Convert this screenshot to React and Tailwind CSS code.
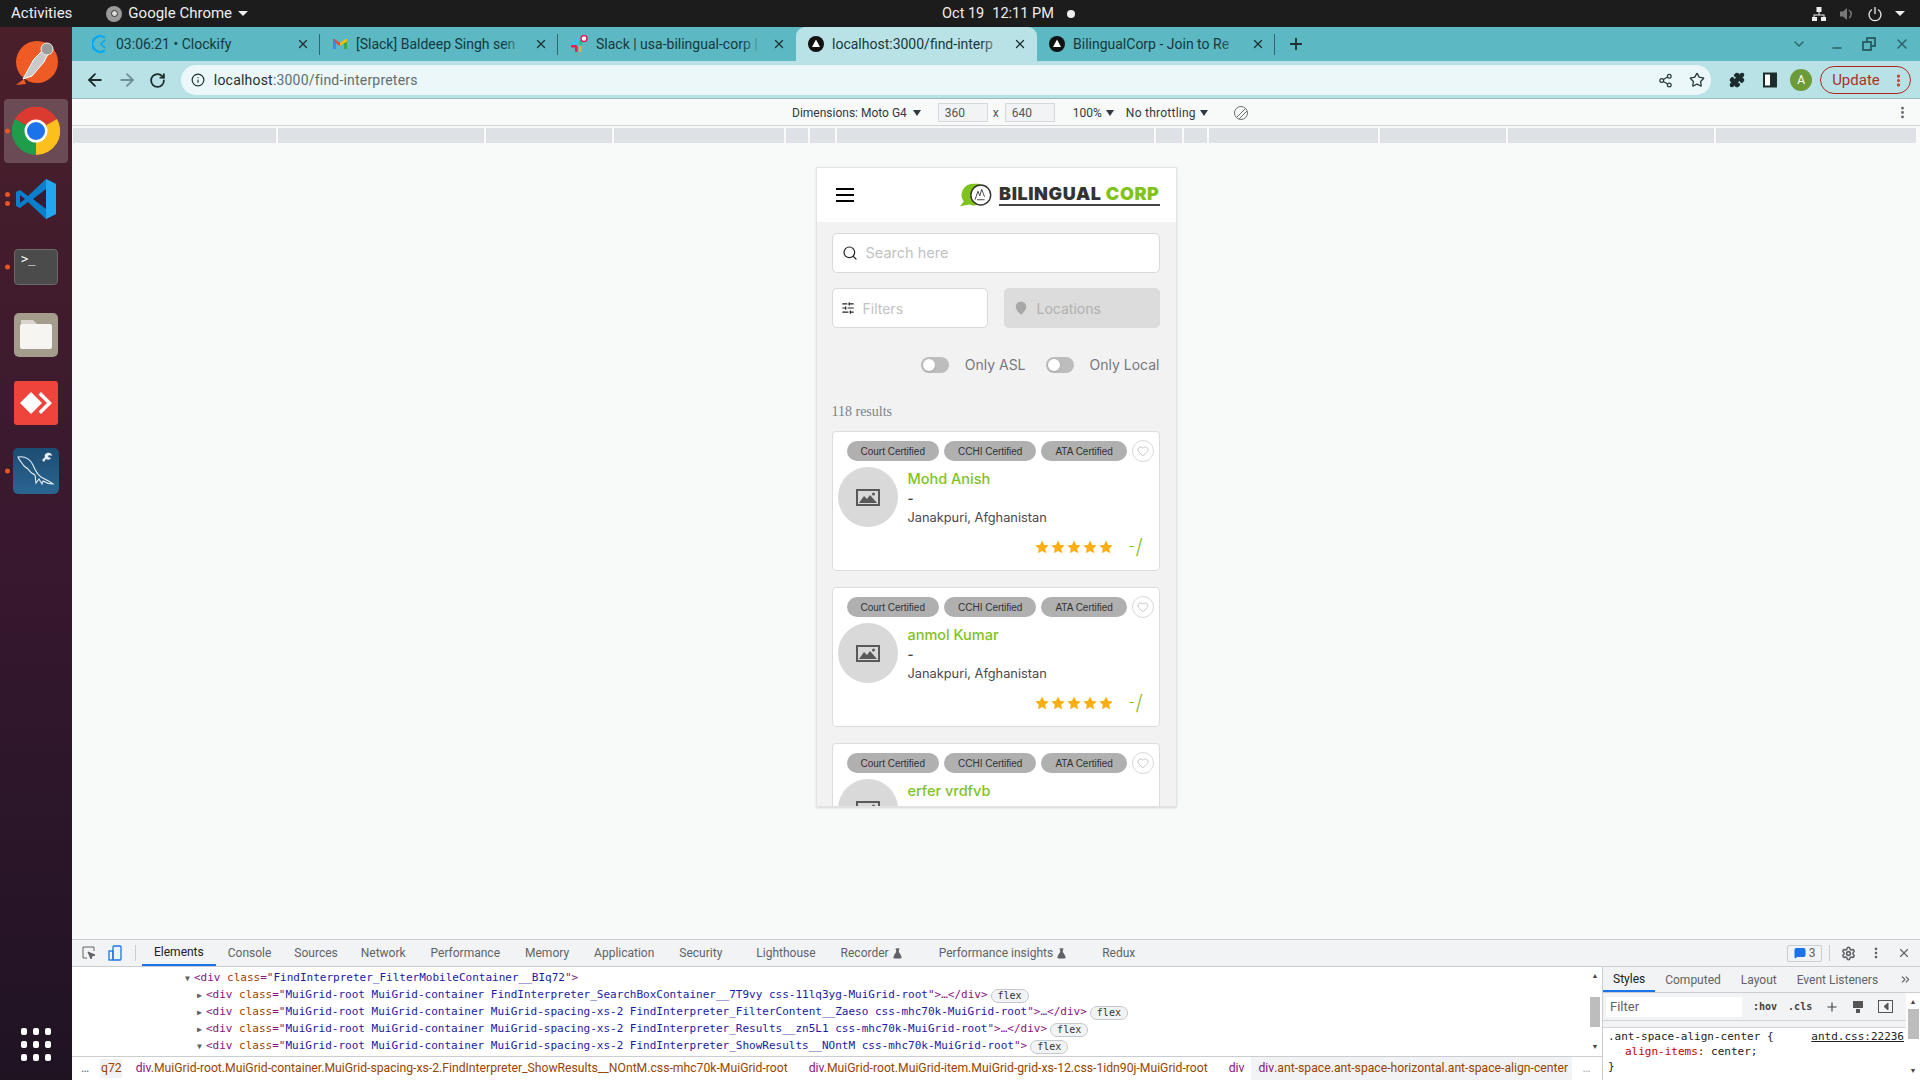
import React from 'react';
import { ArrowLeft, ArrowRight, RotateCw, Info, Share2, Star, Puzzle, Search, SlidersHorizontal, MapPin, Heart, X, Plus, ChevronDown, Minus, MoreVertical, Settings, MessageSquare, ChevronsRight, FlaskConical } from 'lucide-react';

const mediaStops = [203, 206, 126, 170, 22, 25, 317, 26, 23, 169, 126, 206, 200];

function BlackTriangleIcon() {
  return (
    <svg width="16" height="16" viewBox="0 0 16 16" className="shrink-0">
      <circle cx="8" cy="8" r="8" fill="#111" />
      <path d="M8 3.500 L12 11 H4 Z" fill="#fff" />
    </svg>
  );
}

function GmailIcon() {
  return (
    <svg width="16" height="16" viewBox="0 0 16 16" className="shrink-0">
      <path d="M1 3v10h3V7l4 3V7L2.500 3z" fill="#ea4335" />
      <path d="M1 3v10h3V6z" fill="#4285f4" />
      <path d="M15 3v10h-3V7L8 10V7l5.500-4z" fill="#fbbc04" />
      <path d="M15 6v7h-3V7z" fill="#34a853" />
    </svg>
  );
}

function SlackIcon() {
  return (
    <svg width="18" height="18" viewBox="0 0 18 18" className="shrink-0">
      <rect x="1" y="7" width="6" height="2.500" rx="1.200" fill="#36c5f0" />
      <rect x="6" y="3" width="2.500" height="6" rx="1.200" fill="#36c5f0" />
      <rect x="9.500" y="5" width="2.500" height="5" rx="1.200" fill="#2eb67d" />
      <rect x="1" y="10" width="6" height="2.500" rx="1.200" fill="#e01e5a" />
      <rect x="5" y="11" width="2.500" height="6" rx="1.200" fill="#e01e5a" />
      <rect x="9" y="11" width="2.500" height="6" rx="1.200" fill="#ecb22e" />
      <circle cx="14" cy="3.500" r="3" fill="#fff" stroke="#e01e5a" strokeWidth="1.500" />
    </svg>
  );
}

function ClockifyIcon() {
  return (
    <svg width="16" height="20" viewBox="0 0 16 20" fill="none" className="shrink-0">
      <path d="M13 3.500 A8 8 0 1 0 13 16.500" stroke="#03a9f4" strokeWidth="2.200" />
      <path d="M13 6 L9 10 L13 14" stroke="#03a9f4" strokeWidth="1.500" />
    </svg>
  );
}

function BrowserTab({ icon, title, width, active, separator, first }) {
  return (
    <div
      style={{ width }}
      className={`relative flex h-full shrink-0 items-center gap-2 pr-[10px] ${first ? 'pl-[20px]' : 'pl-[12px]'} ${active ? 'rounded-t-[9px] bg-[#b9e2e6]' : ''}`}
    >
      {icon}
      <div className="relative min-w-0 flex-1 whitespace-nowrap text-[14px] text-[#15393d]">
        {title}
        <div className={`absolute inset-y-0 right-0 w-6 bg-gradient-to-r from-transparent ${active ? 'to-[#b9e2e6]' : 'to-[#5cb8c2]'}`} />
      </div>
      <X size={14} strokeWidth={2.2} className="shrink-0 text-[#1d2f31]" />
      {separator && <div className="absolute right-0 top-[7px] h-[21px] w-px bg-[#33666c]" />}
    </div>
  );
}

function GnomeTopBar() {
  return (
    <div className="flex h-[27px] shrink-0 items-center bg-[#1c1c1c] text-[15px] text-[#eeeeee]">
      <span className="ml-[11px]">Activities</span>
      <div className="ml-[34px] flex items-center gap-[6px]">
        <div className="flex h-[16px] w-[16px] items-center justify-center rounded-full bg-[#9a9a9a]">
          <div className="h-[7px] w-[7px] rounded-full border border-[#333] bg-[#ddd]" />
        </div>
        <span>Google Chrome</span>
        <span className="h-0 w-0 border-x-[5px] border-t-[5px] border-x-transparent border-t-[#eee]" />
      </div>
      <div className="ml-[694px] flex items-center text-[14.500px]">
        <span>Oct 19</span>
        <span className="ml-[8px]">12:11 PM</span>
        <span className="ml-[13px] h-[8px] w-[8px] rounded-full bg-[#eee]" />
      </div>
      <div className="ml-auto mr-[15px] flex items-center gap-[12px]">
        <svg width="16" height="16" viewBox="0 0 16 16" fill="#eee">
          <rect x="5.500" y="1" width="5" height="5" />
          <rect x="1" y="11" width="5" height="4" />
          <rect x="10" y="11" width="5" height="4" />
          <path d="M7.500 6h1v2.500h5V11h-1V9.500h-9V11h-1V8.500h5z" />
        </svg>
        <svg width="16" height="16" viewBox="0 0 16 16" fill="#777">
          <path d="M1 5.500h3L8 2v12l-4-3.500H1z" />
          <path d="M10 4c3 2 3 6 0 8" fill="none" stroke="#777" strokeWidth="1.500" />
        </svg>
        <svg width="16" height="16" viewBox="0 0 16 16" fill="none" stroke="#eee" strokeWidth="1.300">
          <path d="M5 3.500a6 6 0 1 0 6 0M8 1v7" />
        </svg>
        <span className="h-0 w-0 border-x-[5px] border-t-[5px] border-x-transparent border-t-[#eee]" />
      </div>
    </div>
  );
}

function DockSlot({ children, dots = 0, active }) {
  return (
    <div className="relative flex h-[68px] w-full items-center justify-center">
      {active && <div className="absolute inset-x-[4px] inset-y-[2px] rounded-[4px] bg-white/20" />}
      <div className="relative">{children}</div>
      {dots > 0 && (
        <div className="absolute left-[5px] top-1/2 flex -translate-y-1/2 flex-col gap-[4px]">
          {Array.from({ length: dots }).map((_, i) => (
            <span key={i} className="block h-[5px] w-[5px] rounded-full bg-[#e95420]" />
          ))}
        </div>
      )}
    </div>
  );
}

function Dock() {
  return (
    <div className="flex w-[72px] shrink-0 flex-col items-center bg-gradient-to-b from-[#4a1f2a] via-[#38182f] to-[#1f1322] pt-[2px]">
      <DockSlot>
        <svg width="44" height="46" viewBox="0 0 44 46">
          <circle cx="23" cy="22" r="21" fill="#ef5b25" />
          <path d="M2 45 L10 39 L12 44 Z" fill="#ef5b25" />
          <path d="M9 39 L20 19 L30 9 L35 12 L30 22 L18 36 Z" fill="#c9c9c9" stroke="#fff" strokeWidth="1" />
          <circle cx="33" cy="9" r="6" fill="#9b9b9b" stroke="#eee" strokeWidth="1" />
        </svg>
      </DockSlot>
      <DockSlot active dots={1}>
        <svg width="48" height="48" viewBox="0 0 48 48">
          <path d="M24 24 L3 12 A24 24 0 0 1 45 12 Z" fill="#db3a2f" />
          <path d="M24 24 L45 12 A24 24 0 0 1 24 48 Z" fill="#fcc01c" />
          <path d="M24 24 L24 48 A24 24 0 0 1 3 12 Z" fill="#1f9d4b" />
          <circle cx="24" cy="24" r="11.500" fill="#fff" />
          <circle cx="24" cy="24" r="9" fill="#1a73e8" />
        </svg>
      </DockSlot>
      <DockSlot dots={2}>
        <svg width="42" height="42" viewBox="0 0 42 42">
          <path d="M31 1 L41 6 V36 L31 41 L13 24 L5 30 L1 28 V14 L5 12 L13 18 Z" fill="#0a7fcb" />
          <path d="M31 1 L41 6 V36 L31 41 Z" fill="#23a6f0" />
          <path d="M31 11 V31 L18 21 Z" fill="#3a1a2e" />
          <path d="M5 17 L10 21 L5 25 Z" fill="#3a1a2e" />
        </svg>
      </DockSlot>
      <DockSlot dots={1}>
        <div className="h-[36px] w-[44px] rounded-[4px] border border-[#6b6b6b] bg-[#4b4b4b] pl-[6px] font-['DejaVu_Sans_Mono',monospace] text-[12px] leading-[18px] text-white">
          &gt;_
        </div>
      </DockSlot>
      <DockSlot>
        <div className="flex h-[44px] w-[44px] items-center justify-center rounded-[5px] bg-[#a59d8b]">
          <svg width="34" height="30" viewBox="0 0 34 30">
            <path d="M2 0h12l4 4H2z" fill="#d9d5cc" />
            <rect x="1" y="4" width="32" height="25" rx="2" fill="#f7f5f2" />
          </svg>
        </div>
      </DockSlot>
      <DockSlot>
        <div className="flex h-[44px] w-[44px] items-center justify-center rounded-[3px] bg-[#ef443b]">
          <svg width="32" height="22" viewBox="0 0 32 22" fill="#fff">
            <path d="M11 0 L22 11 L11 22 L0 11 Z" />
            <path d="M21 0 L32 11 L21 22 L18.500 19.500 L27 11 L18.500 2.500 Z" />
          </svg>
        </div>
      </DockSlot>
      <DockSlot dots={1}>
        <div className="flex h-[46px] w-[46px] items-center justify-center rounded-[5px] bg-gradient-to-b from-[#1d4d73] to-[#2a6592]">
          <svg width="42" height="42" viewBox="0 0 42 42" fill="none" stroke="#e6eef3" strokeWidth="1.100">
            <path d="M3 7c7-1 12 2 15 8 2 5 4 9 8 12 4 2 8 4 12 7-4 0-7-1-10-3l-1 3-3-5-3 4-1-8c-3-1-5-3-7-6L9 16C7 13 4 10 3 7z" />
            <path d="M32 3c3-1 5 1 5 3l-3-1-1 2 3 1c-1 2-3 2-5 1l-2 3-2-2 3-3c-1-2 0-3 2-4z" fill="#e6eef3" stroke="none" />
          </svg>
        </div>
      </DockSlot>
      <div className="mb-[19px] mt-auto grid grid-cols-3 gap-x-[6px] gap-y-[6px]">
        {Array.from({ length: 9 }).map((_, i) => (
          <span key={i} className="block h-[7px] w-[6px] rounded-[2px] bg-white" />
        ))}
      </div>
    </div>
  );
}

function BrowserChrome() {
  return (
    <>
      <div className="flex h-[34px] shrink-0 items-end bg-[#5cb8c2]">
        <BrowserTab first width={248} title="03:06:21 • Clockify" icon={<ClockifyIcon />} separator />
        <BrowserTab width={238} title="[Slack] Baldeep Singh sen" icon={<GmailIcon />} separator />
        <BrowserTab width={238} title="Slack | usa-bilingual-corp |" icon={<SlackIcon />} />
        <BrowserTab width={241} title="localhost:3000/find-interp" icon={<BlackTriangleIcon />} active />
        <BrowserTab width={238} title="BilingualCorp - Join to Re" icon={<BlackTriangleIcon />} separator />
        <div className="ml-[12px] flex items-center self-center text-[#1d2f31]">
          <Plus size={18} strokeWidth={2.4} />
        </div>
        <div className="ml-auto mr-[10px] flex items-center self-center text-[#2d6269]">
          <ChevronDown size={16} />
          <Minus size={14} strokeWidth={2.5} className="ml-[23px] translate-y-[4px]" />
          <svg width="14" height="14" viewBox="0 0 14 14" fill="none" stroke="currentColor" strokeWidth="2" className="ml-[18px]">
            <rect x="5" y="1" width="8" height="8" />
            <rect x="1" y="5" width="8" height="8" fill="#5cb8c2" />
          </svg>
          <X size={16} strokeWidth={2.2} className="ml-[18px]" />
        </div>
      </div>
      <div className="flex h-[38px] shrink-0 items-center border-b border-[#9fb8bb] bg-[#b9e2e6] pr-[9px] pt-[1px]">
        <div className="flex w-[109px] items-center gap-[12px] pl-[13px] text-[#1c2b2d]">
          <ArrowLeft size={20} strokeWidth={2.2} />
          <ArrowRight size={20} strokeWidth={2.2} className="text-[#6c9196]" />
          <RotateCw size={17} strokeWidth={2.5} />
        </div>
        <div className="flex h-[30px] w-[1533px] items-center rounded-full bg-[#ebf7f8] pl-[10px] pr-[6px]">
          <Info size={14} className="text-[#1d2f31]" />
          <span className="ml-[9px] text-[14px] tracking-[0.2px] text-[#1f2f31]">
            localhost<span className="text-[#5f6f71]">:3000/find-interpreters</span>
          </span>
          <Share2 size={15} className="ml-auto text-[#2a3c3e]" />
          <Star size={16} className="ml-[16px] text-[#2a3c3e]" />
        </div>
        <Puzzle size={16} fill="#1c2b2d" className="ml-[18px] text-[#1c2b2d]" />
        <svg width="16" height="16" viewBox="0 0 16 16" className="ml-[17px]">
          <rect x="2" y="1.500" width="12" height="13" fill="#fff" stroke="#1c2b2d" strokeWidth="2" />
          <rect x="8" y="1" width="6" height="14" fill="#1c2b2d" />
        </svg>
        <div className="ml-[12px] flex h-[22px] w-[22px] items-center justify-center rounded-full bg-[#6d9b3a] text-[12px] text-white">A</div>
        <div className="ml-[8px] flex h-[28px] w-[91px] items-center rounded-full border border-[#b3261e] pl-[11px] text-[15px] text-[#a8322a]">
          Update
          <MoreVertical size={15} strokeWidth={3} className="ml-auto mr-[4px] text-[#d93025]" />
        </div>
      </div>
    </>
  );
}

function DeviceToolbar() {
  return (
    <div className="flex h-[27px] shrink-0 items-center border-b border-[#cfd2d4] bg-[#f8f9f9] pt-[1px] text-[12px] text-[#303942]">
      <span className="ml-[720px]">Dimensions: Moto G4</span>
      <span className="ml-[6px] h-0 w-0 border-x-[4px] border-t-[6px] border-x-transparent border-t-[#303942]" />
      <div className="ml-[17px] flex h-[19px] w-[50px] items-center border border-[#d6d9dc] bg-[#f1f3f4] pl-[6px] text-[#555]">360</div>
      <span className="ml-[5px] text-[#555]">x</span>
      <div className="ml-[6px] flex h-[19px] w-[50px] items-center border border-[#d6d9dc] bg-[#f1f3f4] pl-[6px] text-[#555]">640</div>
      <span className="ml-[18px]">100%</span>
      <span className="ml-[4px] h-0 w-0 border-x-[4px] border-t-[6px] border-x-transparent border-t-[#303942]" />
      <span className="ml-[12px] tracking-[0.25px]">No throttling</span>
      <span className="ml-[4px] h-0 w-0 border-x-[4px] border-t-[6px] border-x-transparent border-t-[#303942]" />
      <svg width="16" height="16" viewBox="0 0 16 16" fill="none" stroke="#6e6e6e" className="ml-[25px]">
        <circle cx="8" cy="8" r="6.500" />
        <path d="M3.500 12.500 L12.500 3.500 M6 14 L14 6" />
      </svg>
      <MoreVertical size={15} strokeWidth={2.5} className="ml-auto mr-[10px] text-[#5f6368]" />
    </div>
  );
}

function MediaBar() {
  return (
    <div className="flex h-[19px] shrink-0 gap-[2px] bg-[#f8f9f9] pl-[1px] pt-[2px]">
      {mediaStops.map((w, i) => (
        <div key={i} style={{ width: w }} className="h-[15px] bg-[#dee1e6]" />
      ))}
    </div>
  );
}

function FieldBox({ children, className }) {
  return <div className={`flex items-center rounded-[5px] border ${className}`}>{children}</div>;
}

function Toggle({ label }) {
  return (
    <div className="flex items-center gap-[16px]">
      <div className="flex h-[16px] w-[28px] items-center rounded-full bg-[#bdbdbd] pl-[2px]">
        <span className="h-[12px] w-[12px] rounded-full bg-white shadow" />
      </div>
      <span className="text-[14px] text-[#77777f]">{label}</span>
    </div>
  );
}

function InterpreterCard({ name }) {
  return (
    <div className="mb-[16px] h-[140px] shrink-0 rounded-[4px] border border-[#dcdcdc] bg-white">
      <div className="flex items-center pl-[14px] pt-[8px]">
        {['Court Certified', 'CCHI Certified', 'ATA Certified'].map((label) => (
          <span
            key={label}
            className="mr-[5px] flex h-[20px] shrink-0 items-center whitespace-nowrap rounded-full bg-[#b0b0b0] px-[14px] font-['Liberation_Sans',sans-serif] text-[10px] text-[#333]"
          >
            {label}
          </span>
        ))}
        <div className="flex h-[22px] w-[22px] shrink-0 items-center justify-center rounded-full border border-[#d9d9d9]">
          <Heart size={12} className="text-[#c8c8c8]" />
        </div>
      </div>
      <div className="flex pl-[5px] pt-[5px]">
        <div className="flex h-[60px] w-[60px] shrink-0 items-center justify-center rounded-full bg-[#d9d9d9]">
          <svg width="24" height="17" viewBox="0 0 24 17">
            <rect x="1" y="1" width="22" height="15" fill="none" stroke="#595959" strokeWidth="2" />
            <path d="M3 14 L8 7 L11 10 L14 6 L21 14 Z" fill="#595959" />
            <circle cx="17.500" cy="5" r="1.500" fill="#595959" />
          </svg>
        </div>
        <div className="ml-[10px] flex-1">
          <div className="text-[14.500px] font-medium leading-[24px] text-[#7fc31c]">{name}</div>
          <div className="text-[13px] font-semibold leading-[14px] text-[#444]">-</div>
          <div className="mt-[3px] text-[12.800px] leading-[20px] text-[#48484f]">Janakpuri, Afghanistan</div>
          <div className="mt-[9px] flex items-center pl-[127px]">
            {[0, 1, 2, 3, 4].map((i) => (
              <svg key={i} width="14" height="14" viewBox="0 0 24 24" fill="#faad14" className="mr-[2px]">
                <path d="M12 1 L15.400 8.300 L23.300 9.300 L17.500 14.800 L19 22.700 L12 18.800 L5 22.700 L6.500 14.800 L0.700 9.300 L8.600 8.300 Z" />
              </svg>
            ))}
            <span className="ml-[14px] text-[13px] text-[#7fc31c]">-</span>
            <span className="ml-[1px] text-[21px] font-light leading-[18px] text-[#8fbf1e]">/</span>
          </div>
        </div>
      </div>
    </div>
  );
}

function PhoneView() {
  return (
    <div className="flex h-[640px] w-[361px] flex-col overflow-hidden border-x border-b border-t border-[#e3e3e3] bg-[#f2f2f2] font-['Inter',sans-serif] shadow-sm">
      <div className="flex h-[54px] shrink-0 items-center justify-between bg-white pl-[19px] pr-[16px]">
        <div className="flex w-[18px] flex-col gap-[4px]">
          <span className="h-[2px] bg-black" />
          <span className="h-[2px] bg-black" />
          <span className="h-[2px] bg-black" />
        </div>
        <div className="flex items-center gap-[5px]">
          <svg width="35" height="26" viewBox="0 0 37 26">
            <path d="M15 1 a12 12 0 0 0-10 19 L1 25 L11 23 a12 12 0 0 0 10-22z" fill="#7fc31c" />
            <circle cx="23" cy="13" r="10.500" fill="#fff" stroke="#333" strokeWidth="1.500" />
            <path d="M17 18l3-9 2 5 2-7 3 8M19 18h8" fill="none" stroke="#444" strokeWidth="1" />
          </svg>
          <div className="flex flex-col">
            <span className="whitespace-nowrap text-[18px] font-black leading-[17px] tracking-[0.6px] text-[#333]">
              BILINGUAL <span className="text-[#7fc31c]">CORP</span>
            </span>
            <span className="mt-[2px] h-[2px] bg-[#444]" />
          </div>
        </div>
      </div>
      <div className="flex flex-1 flex-col overflow-hidden px-[15px] pr-[16px] pt-[11px]">
        <FieldBox className="h-[40px] shrink-0 border-[#d9d9d9] bg-white pl-[9px]">
          <Search size={16} strokeWidth={1.8} className="text-[#222]" />
          <span className="ml-[8px] text-[14.500px] text-[#c2c2c2]">Search here</span>
        </FieldBox>
        <div className="mt-[15px] flex shrink-0 gap-[16px]">
          <FieldBox className="h-[40px] w-[156px] border-[#d9d9d9] bg-white pl-[8px]">
            <SlidersHorizontal size={14} className="text-[#222]" />
            <span className="ml-[8px] text-[14px] text-[#c2c2c2]">Filters</span>
          </FieldBox>
          <FieldBox className="h-[40px] w-[156px] border-[#dcdcdc] bg-[#dcdcdc] pl-[9px]">
            <MapPin size={14} fill="#a8a8a8" className="text-[#a8a8a8]" />
            <span className="ml-[9px] text-[14px] text-[#b0b0b0]">Locations</span>
          </FieldBox>
        </div>
        <div className="mt-[26px] flex shrink-0 items-center justify-end gap-[20px]">
          <Toggle label="Only ASL" />
          <Toggle label="Only Local" />
        </div>
        <div className="mt-[27px] shrink-0 font-['Liberation_Serif',serif] text-[14px] leading-[20px] text-[#7b838c]">118 results</div>
        <div className="mt-[9px] flex flex-col">
          <InterpreterCard name="Mohd Anish" />
          <InterpreterCard name="anmol Kumar" />
          <InterpreterCard name="erfer vrdfvb" />
        </div>
      </div>
    </div>
  );
}

function CodeLine({ indent, open, name, rest, badge }) {
  return (
    <div style={{ paddingLeft: indent }} className="flex h-[17px] items-center whitespace-nowrap">
      <span className="mr-[2px] w-[7px] text-[8px] leading-none text-[#5f6368]">{open ? '▼' : '▶'}</span>
      <span className="text-[#881280]">&lt;div</span>
      <span className="text-[#994500]">&nbsp;class</span>
      <span className="text-[#881280]">="</span>
      <span className="text-[#1a1aa6]">{name}</span>
      <span className="text-[#881280]">"&gt;</span>
      {rest && <span className="text-[#881280]">…&lt;/div&gt;</span>}
      {badge && (
        <span className="ml-[3px] flex h-[14px] items-center rounded-full border border-[#c5c8cc] bg-[#f1f3f4] px-[6px] text-[10px] text-[#333]">flex</span>
      )}
    </div>
  );
}

function ScrollTrack({ thumbTop, thumbWidth }) {
  return (
    <div className="flex w-[14px] shrink-0 flex-col items-center py-[5px] text-[7px] leading-[8px] text-[#444]">
      <span>▲</span>
      <div style={{ marginTop: thumbTop, width: thumbWidth }} className="h-[30px] bg-[#bdbdbd]" />
      <span className="mt-auto">▼</span>
    </div>
  );
}

function DevTools() {
  const tabs = [
    ['Console', 12],
    ['Sources', 23],
    ['Network', 23],
    ['Performance', 25],
    ['Memory', 25],
    ['Application', 25],
    ['Security', 25],
    ['Lighthouse', 34],
  ];
  return (
    <div className="flex h-[141px] shrink-0 flex-col border-t border-[#cbcdd1] bg-white font-['Roboto',sans-serif]">
      <div className="flex h-[27px] shrink-0 items-center border-b border-[#cbcdd1] bg-[#f1f3f4] text-[12px] text-[#5f6368]">
        <svg width="14" height="14" viewBox="0 0 14 14" fill="none" stroke="#5f6368" className="ml-[10px]">
          <path d="M5 12H1V1h11v4" />
          <path d="M6 6l7 3-3 1-1 3z" fill="#5f6368" />
        </svg>
        <svg width="14" height="16" viewBox="0 0 14 16" fill="none" stroke="#1a73e8" strokeWidth="1.300" className="ml-[12px]">
          <rect x="5" y="1" width="8" height="14" rx="1" />
          <rect x="1" y="6" width="4" height="9" />
        </svg>
        <div className="ml-[13px] h-[16px] w-px bg-[#ccc]" />
        <div className="ml-[6px] flex h-full items-center border-b-2 border-[#1a73e8] px-[12px] text-[#202124]">Elements</div>
        {tabs.map(([label, gap]) => (
          <span key={label} style={{ marginLeft: gap }}>{label}</span>
        ))}
        <span className="ml-[25px] flex items-center gap-[3px]">Recorder <FlaskConical size={11} fill="#5f6368" /></span>
        <span className="ml-[36px] flex items-center gap-[3px]">Performance insights <FlaskConical size={11} fill="#5f6368" /></span>
        <span className="ml-[35px]">Redux</span>
        <div className="ml-auto flex h-[17px] w-[35px] items-center justify-center gap-[3px] rounded-[2px] border border-[#cbcdd1]">
          <MessageSquare size={12} fill="#1a73e8" className="text-[#1a73e8]" />
          <span>3</span>
        </div>
        <div className="ml-[7px] h-[16px] w-px bg-[#ccc]" />
        <Settings size={15} strokeWidth={2.5} className="ml-[11px]" />
        <MoreVertical size={14} strokeWidth={2.5} className="ml-[13px]" />
        <X size={14} strokeWidth={2} className="ml-[14px] mr-[9px]" />
      </div>
      <div className="flex min-h-0 flex-1">
        <div className="flex min-w-0 flex-1 flex-col">
          <div className="flex min-h-0 flex-1">
            <div className="flex-1 overflow-hidden pt-[3px] font-['DejaVu_Sans_Mono',monospace] text-[11px]">
              <CodeLine indent={113} open name="FindInterpreter_FilterMobileContainer__BIq72" />
              <CodeLine indent={125} rest badge name="MuiGrid-root MuiGrid-container FindInterpreter_SearchBoxContainer__7T9vy css-11lq3yg-MuiGrid-root" />
              <CodeLine indent={125} rest badge name="MuiGrid-root MuiGrid-container MuiGrid-spacing-xs-2 FindInterpreter_FilterContent__Zaeso css-mhc70k-MuiGrid-root" />
              <CodeLine indent={125} rest badge name="MuiGrid-root MuiGrid-container MuiGrid-spacing-xs-2 FindInterpreter_Results__zn5L1 css-mhc70k-MuiGrid-root" />
              <CodeLine indent={125} open badge name="MuiGrid-root MuiGrid-container MuiGrid-spacing-xs-2 FindInterpreter_ShowResults__NOntM css-mhc70k-MuiGrid-root" />
            </div>
            <ScrollTrack thumbTop={17} thumbWidth={10} />
          </div>
          <div className="flex h-[24px] shrink-0 items-center whitespace-nowrap border-t border-[#cbcdd1] text-[12.200px] text-[#994500]">
            <span className="ml-[9px] w-[19px] text-[#5f6368]">…</span>
            <span className="bg-[#f1f3f4] pl-[1px]">q72</span>
            <span className="ml-[14px] w-[660px]"><span className="text-[#881280]">div</span>.MuiGrid-root.MuiGrid-container.MuiGrid-spacing-xs-2.FindInterpreter_ShowResults__NOntM.css-mhc70k-MuiGrid-root</span>
            <span className="ml-[13px] w-[404px]"><span className="text-[#881280]">div</span>.MuiGrid-root.MuiGrid-item.MuiGrid-grid-xs-12.css-1idn90j-MuiGrid-root</span>
            <span className="ml-[16px] text-[#881280]">div</span>
            <span className="ml-[7px] flex h-full w-[321px] items-center bg-[#f1f3f4] pl-[7px]"><span className="text-[#881280]">div</span>.ant-space.ant-space-horizontal.ant-space-align-center</span>
            <span className="ml-[10px] text-[#aaa]">…</span>
          </div>
        </div>
        <div className="flex w-[318px] shrink-0 flex-col border-l border-[#cbcdd1] text-[12px]">
          <div className="flex h-[26px] shrink-0 items-center border-b border-[#cbcdd1] bg-[#f1f3f4] text-[#5f6368]">
            <div className="flex h-full items-center border-b-2 border-[#1a73e8] px-[10px] text-[#202124]">Styles</div>
            <span className="ml-[10px]">Computed</span>
            <span className="ml-[20px]">Layout</span>
            <span className="ml-[20px]">Event Listeners</span>
            <ChevronsRight size={13} className="ml-auto mr-[8px]" />
          </div>
          <div className="flex min-h-0 flex-1">
            <div className="min-w-0 flex-1">
              <div className="flex h-[27px] items-center bg-[#f1f3f4] pl-[3px] text-[#444]">
                <div className="flex h-[20px] w-[136px] items-center bg-white pl-[4px] text-[13px] text-[#5f6368]">Filter</div>
                <span className="ml-[11px] font-['DejaVu_Sans_Mono',monospace] text-[10px] font-bold">:hov</span>
                <span className="ml-[11px] font-['DejaVu_Sans_Mono',monospace] text-[10px] font-bold">.cls</span>
                <Plus size={14} className="ml-[13px]" />
                <svg width="14" height="14" viewBox="0 0 14 14" fill="#555" className="ml-[12px]">
                  <path d="M2 1h10v7H2zM5 9h4v4H5z" />
                </svg>
                <svg width="15" height="13" viewBox="0 0 15 13" fill="none" stroke="#555" className="ml-[13px]">
                  <rect x="0.500" y="0.500" width="14" height="12" />
                  <path d="M10 3v7L6 6.500z" fill="#555" />
                </svg>
              </div>
              <div className="h-[8px] border-y border-[#d3d5d8] bg-[#f1f3f4]" />
              <div className="pl-[5px] pt-[1px] font-['DejaVu_Sans_Mono',monospace] text-[11px] leading-[15px] text-[#222]">
                <div className="flex justify-between pr-[2px]">
                  <span>.ant-space-align-center {'{'}</span>
                  <span className="underline">antd.css:22236</span>
                </div>
                <div className="pl-[17px]"><span className="text-[#c80000]">align-items</span>: center;</div>
                <div>{'}'}</div>
              </div>
            </div>
            <ScrollTrack thumbTop={3} thumbWidth={11} />
          </div>
        </div>
      </div>
    </div>
  );
}

export default function App() {
  return (
    <div className="flex h-[1080px] w-[1920px] flex-col overflow-hidden bg-white font-['Roboto',sans-serif]">
      <GnomeTopBar />
      <div className="flex min-h-0 flex-1">
        <Dock />
        <div className="flex min-w-0 flex-1 flex-col">
          <BrowserChrome />
          <DeviceToolbar />
          <MediaBar />
          <div className="flex min-h-0 flex-1 justify-center bg-[#f8f9f9] pt-[22px]">
            <PhoneView />
          </div>
          <DevTools />
        </div>
      </div>
    </div>
  );
}
